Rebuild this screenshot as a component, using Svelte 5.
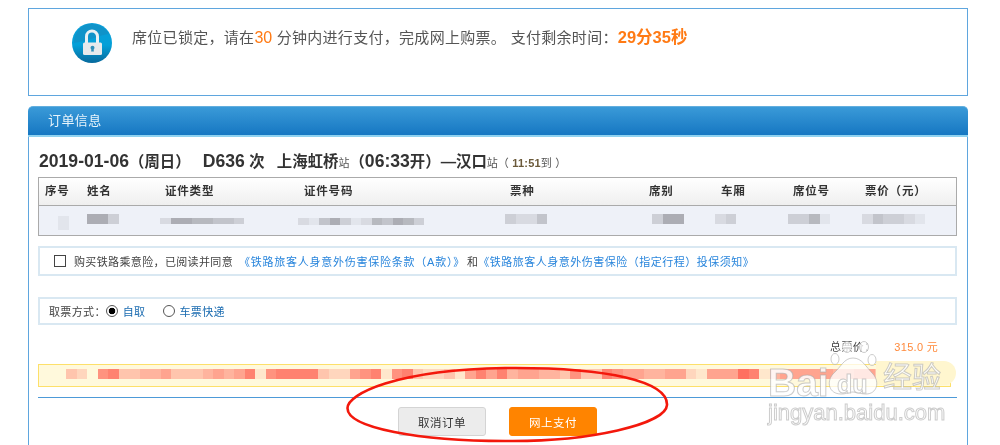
<script lang="ts">
    // mosaic levels for the redacted passenger row and the notice bar
    const cols = [
        { t: "序号", w: 42 },
        { t: "姓名", w: 78 },
        { t: "证件类型", w: 139 },
        { t: "证件号码", w: 206 },
        { t: "票种", w: 139 },
        { t: "席别", w: 72 },
        { t: "车厢", w: 72 },
        { t: "席位号", w: 72 },
        { t: "票价（元）", w: 97 },
    ];
    const rowCells = [
        { w: 42, pad: 19, top: 2, h: 14, cells: "1" },
        { w: 78, pad: 6, top: 0, h: 10, cells: "663" },
        { w: 139, pad: 1, top: 4, h: 6, cells: "26655443" },
        { w: 206, pad: 0, top: 4, h: 7, cells: "214631254653" },
        { w: 139, pad: 1, top: 0, h: 10, cells: "3224" },
        { w: 72, pad: 9, top: 0, h: 10, cells: "366" },
        { w: 72, pad: 0, top: 0, h: 10, cells: "23" },
        { w: 72, pad: 1, top: 0, h: 10, cells: "3351" },
        { w: 97, pad: 3, top: 0, h: 10, cells: "243321" },
    ];
    const bar = "320673344533345457167777322567167322315757455443633765544552155587145555544553335554".split("");
</script>

<div class="page">
    <section class="notice">
        <svg class="lock" viewBox="0 0 40 40" width="40" height="40" aria-hidden="true">
            <defs>
                <linearGradient id="lockBg" x1="0" y1="0" x2="0" y2="1">
                    <stop offset="0" stop-color="#0a9ed8" />
                    <stop offset="0.55" stop-color="#04a0d8" />
                    <stop offset="1" stop-color="#07699c" />
                </linearGradient>
            </defs>
            <circle cx="20" cy="20" r="20" fill="url(#lockBg)" />
            <path d="M12 2.5C20 -1 32 2 37 11C28 12 16 18 2 20C2 12 6 6 12 2.5Z" fill="#1b86b8" opacity="0.45" />
            <path d="M14.5 20v-6.5a5.5 5.5 0 0 1 11 0V20" fill="none" stroke="#e9f1f4" stroke-width="3" />
            <rect x="11" y="19.5" width="19" height="12.5" rx="1.5" fill="#e6eaec" />
            <circle cx="20.5" cy="24.8" r="2" fill="#2f8fb8" />
            <path d="M19.6 25h1.8l.5 3.4h-2.8z" fill="#2f8fb8" />
        </svg>
        <p>席位已锁定，请在<em>30</em> 分钟内进行支付，完成网上购票。 支付剩余时间：<strong>29分35秒</strong></p>
    </section>

    <section class="panel">
        <h2>订单信息</h2>
        <div class="body">
            <div class="trip"><span class="n">2019-01-06</span>（周日） <span class="n d">D636</span> 次 <span class="sp"></span>上海虹桥<small>站</small>（<span class="n">06:33</span>开）—汉口<small>站</small><span class="arr">（ <b>11:51</b>到 ）</span></div>

            <div class="tbl">
                <div class="thead">
                    {#each cols as c}
                        <span style="width:{c.w}px">{c.t}</span>
                    {/each}
                </div>
                <div class="tbody">
                    {#each rowCells as r}
                        <span class="cell" style="width:{r.w}px;padding-left:{r.pad}px;padding-top:{r.top}px">
                            {#each r.cells.split("") as m}
                                <i style="opacity:{+m / 9};height:{r.h}px"></i>
                            {/each}
                        </span>
                    {/each}
                </div>
            </div>

            <div class="box insure">
                <span class="check"></span>
                <span>购买铁路乘意险，已阅读并同意</span>
                <a href="#a">《铁路旅客人身意外伤害保险条款（A款）》</a>
                <span class="and">和</span>
                <a class="second" href="#b">《铁路旅客人身意外伤害保险（指定行程）投保须知》</a>
            </div>

            <div class="box pickup">
                <span>取票方式：</span>
                <span class="radio on"></span>
                <a href="#c">自取</a>
                <span class="radio off"></span>
                <a href="#d">车票快递</a>
            </div>

            <div class="total">
                <span>总票价：</span>
                <b>315.0 元</b>
            </div>

            <div class="warn">
                {#each bar as m}
                    <i style="opacity:{+m / 8}"></i>
                {/each}
            </div>

            <div class="actions">
                <button class="cancel">取消订单</button>
                <button class="pay">网上支付</button>
            </div>
        </div>
    </section>

    <!-- hand-drawn annotation over the buttons -->
    <svg class="circle" width="1000" height="445" aria-hidden="true">
        <path d="M347.5 408C348 394 395 370 505 368C610 367 668 382 667 405C666 424 590 442 505 441C420 441 347 428 347.5 408Z" fill="none" stroke="#f3180c" stroke-width="2.6" />
    </svg>

    <!-- watermark -->
    <div class="wm">
        <div class="blob"></div>
        <svg class="paw" viewBox="0 0 52 54" width="52" height="54" aria-hidden="true">
            <g fill="rgba(255,255,255,.75)" stroke="rgba(170,170,170,.6)" stroke-width="1">
                <ellipse cx="8" cy="18" rx="4" ry="5.5" />
                <ellipse cx="20" cy="6" rx="4.5" ry="5.5" />
                <ellipse cx="37" cy="6" rx="4.5" ry="5.5" />
                <ellipse cx="45" cy="19" rx="4" ry="5.5" />
                <path d="M26 17C17 17 14 26 6 33C-1 41 2 53 14 53C20 53 22 51 26 51C30 51 33 53 39 53C50 53 53 41 46 33C39 26 35 17 26 17Z" />
            </g>
        </svg>
        <span class="baidu">Bai</span><span class="du">du</span><span class="jy">经验</span>
        <span class="url">jingyan.baidu.com</span>
    </div>
</div>

<style>
    :global(body) { margin: 0; background: #fff; }
    .page {
        position: relative;
        width: 1000px;
        height: 445px;
        overflow: hidden;
        padding: 8px 32px 0 28px;
        box-sizing: border-box;
        font-family: "Liberation Sans", "Noto Sans CJK SC", sans-serif;
        font-size: 12px;
        color: #333;
        filter: blur(0.3px);
    }
    .notice {
        display: flex;
        align-items: flex-start;
        gap: 20px;
        height: 88px;
        box-sizing: border-box;
        padding: 14px 0 0 43px;
        border: 1px solid #5fa6de;
    }
    .notice p {
        margin: 4px 0 0;
        font-size: 15px;
        letter-spacing: 0.3px;
        line-height: 20px;
        color: #555;
        white-space: nowrap;
    }
    .notice em { font-style: normal; color: #ff7a14; font-size: 16px; letter-spacing: 0; }
    .notice strong { color: #ff7a14; font-size: 16.5px; letter-spacing: 0; }

    .panel { margin-top: 10px; }
    .panel h2 {
        margin: 0;
        height: 31px;
        box-sizing: border-box;
        padding: 5px 0 0 20px;
        font-size: 13px;
        line-height: 18px;
        font-weight: normal;
        letter-spacing: 0.4px;
        color: #e8f4fb;
        border-radius: 5px 5px 0 0;
        border-top: 1px solid #62aede;
        border-bottom: 2px solid #8fd2f0;
        background: linear-gradient(#3a9ad8, #1677c2);
    }
    .body {
        height: 320px;
        padding: 0 10px 0 9px;
        border: solid #5fa6de;
        border-width: 0 1px;
    }
    .trip {
        padding: 13px 0 1px 1px;
        height: 26px;
        line-height: 22px;
        font-size: 15.4px;
        font-weight: bold;
        color: #333;
        white-space: nowrap;
    }
    .trip .n { font-size: 17.6px; }
    .trip .d { margin-left: 8px; }
    .trip .sp { display: inline-block; width: 8px; }
    .trip small { font-size: 11px; font-weight: normal; color: #555; }
    .arr { font-size: 11px; font-weight: normal; color: #555; letter-spacing: 0.2px; }
    .arr b { color: #6b5a3a; }

    .tbl {
        width: 919px;
        border: 1px solid #aaa;
        box-sizing: border-box;
    }
    .thead {
        display: flex;
        height: 28px;
        line-height: 27px;
        background: linear-gradient(#fff, #efefef);
        border-bottom: 1px solid #aaa;
        box-sizing: border-box;
        font-weight: bold;
        font-size: 11.5px;
        letter-spacing: 0.8px;
        color: #333;
    }
    .thead span { padding-left: 6px; box-sizing: border-box; flex: none; }
    .tbody {
        display: flex;
        height: 29px;
        background: #eef1f8;
        align-items: flex-start;
        padding-top: 8px;
        box-sizing: border-box;
    }
    .cell { display: flex; flex: none; box-sizing: border-box; }
    .cell i { width: 10.5px; background: #8c8c92; }

    .box {
        display: flex;
        align-items: center;
        width: 919px;
        box-sizing: border-box;
        border: 2px solid #d9e8f2;
        font-size: 11px;
        white-space: nowrap;
        color: #444;
    }
    .insure { margin-top: 10px; height: 30px; padding-left: 14px; letter-spacing: 0.36px; }
    .insure a { color: #2a86dc; text-decoration: none; letter-spacing: 0.75px; margin-left: 6px; }
    .insure a.second { letter-spacing: 0.5px; margin-left: 0; }
    .insure .and { margin-left: 2px; }
    .check {
        width: 12px;
        height: 12px;
        border: 1px solid #444;
        margin-right: 8px;
        flex: none;
        box-sizing: border-box;
    }
    .pickup { margin-top: 21px; height: 28px; padding-left: 9px; letter-spacing: 0.35px; }
    .pickup a { color: #1a6bb0; text-decoration: none; }
    .radio {
        width: 12px;
        height: 12px;
        border-radius: 50%;
        box-sizing: border-box;
        border: 1px solid #555;
        flex: none;
        background: #fff;
    }
    .radio.on { background: radial-gradient(circle, #000 3px, #fff 3.6px); margin-right: 5px; }
    .radio.off { margin-left: 18px; margin-right: 4px; }

    .total {
        display: flex;
        justify-content: flex-end;
        gap: 19px;
        width: 900px;
        margin-top: 14px;
        height: 16px;
        line-height: 16px;
        font-size: 11px;
        letter-spacing: 0.3px;
        color: #444;
    }
    .total b { font-weight: normal; color: #ff8a3c; }

    .warn {
        display: flex;
        width: 913px;
        height: 23px;
        margin-top: 9px;
        box-sizing: border-box;
        padding: 4px 0 0 27px;
        background: #fff9dc;
        border: 1px solid #fde06a;
        overflow: hidden;
    }
    .warn i { flex: none; width: 10.5px; height: 10px; background: #ff7060; }

    .actions {
        display: flex;
        justify-content: center;
        gap: 23px;
        width: 919px;
        margin-top: 10px;
        padding-top: 9px;
        border-top: 1px solid #4d9ad8;
    }
    .actions button {
        width: 88px;
        height: 29px;
        font: inherit;
        font-size: 11.5px;
        letter-spacing: 0.5px;
        border-radius: 3px;
        padding: 0;
    }
    .cancel { background: #ececec; border: 1px solid #d4d4d4; color: #333; }
    .pay { background: #ff8400; border: 1px solid #ff8400; color: #fff; }

    .circle { position: absolute; left: 0; top: 0; pointer-events: none; }

    .wm {
        position: absolute;
        left: 768px;
        top: 340px;
        width: 190px;
        height: 90px;
        color: rgba(255, 255, 255, 0.85);
        pointer-events: none;
    }
    .wm span {
        position: absolute;
        -webkit-text-stroke: 1px rgba(170, 170, 170, 0.6);
        white-space: nowrap;
    }
    .blob {
        position: absolute;
        left: 108px;
        top: 21px;
        width: 80px;
        height: 24px;
        border-radius: 0 12px 12px 0;
        background: #fff6cf;
    }
    .paw { position: absolute; left: 59px; top: 1px; }
    .baidu { left: 0; top: 20px; font-size: 39px; line-height: 46px; font-weight: bold; }
    .du { left: 69px; top: 29px; font-size: 25px; line-height: 30px; font-weight: bold; }
    .jy { left: 115px; top: 19px; font-size: 29px; line-height: 38px; }
    .url { left: 0; top: 60px; font-size: 22px; line-height: 26px; }
</style>
